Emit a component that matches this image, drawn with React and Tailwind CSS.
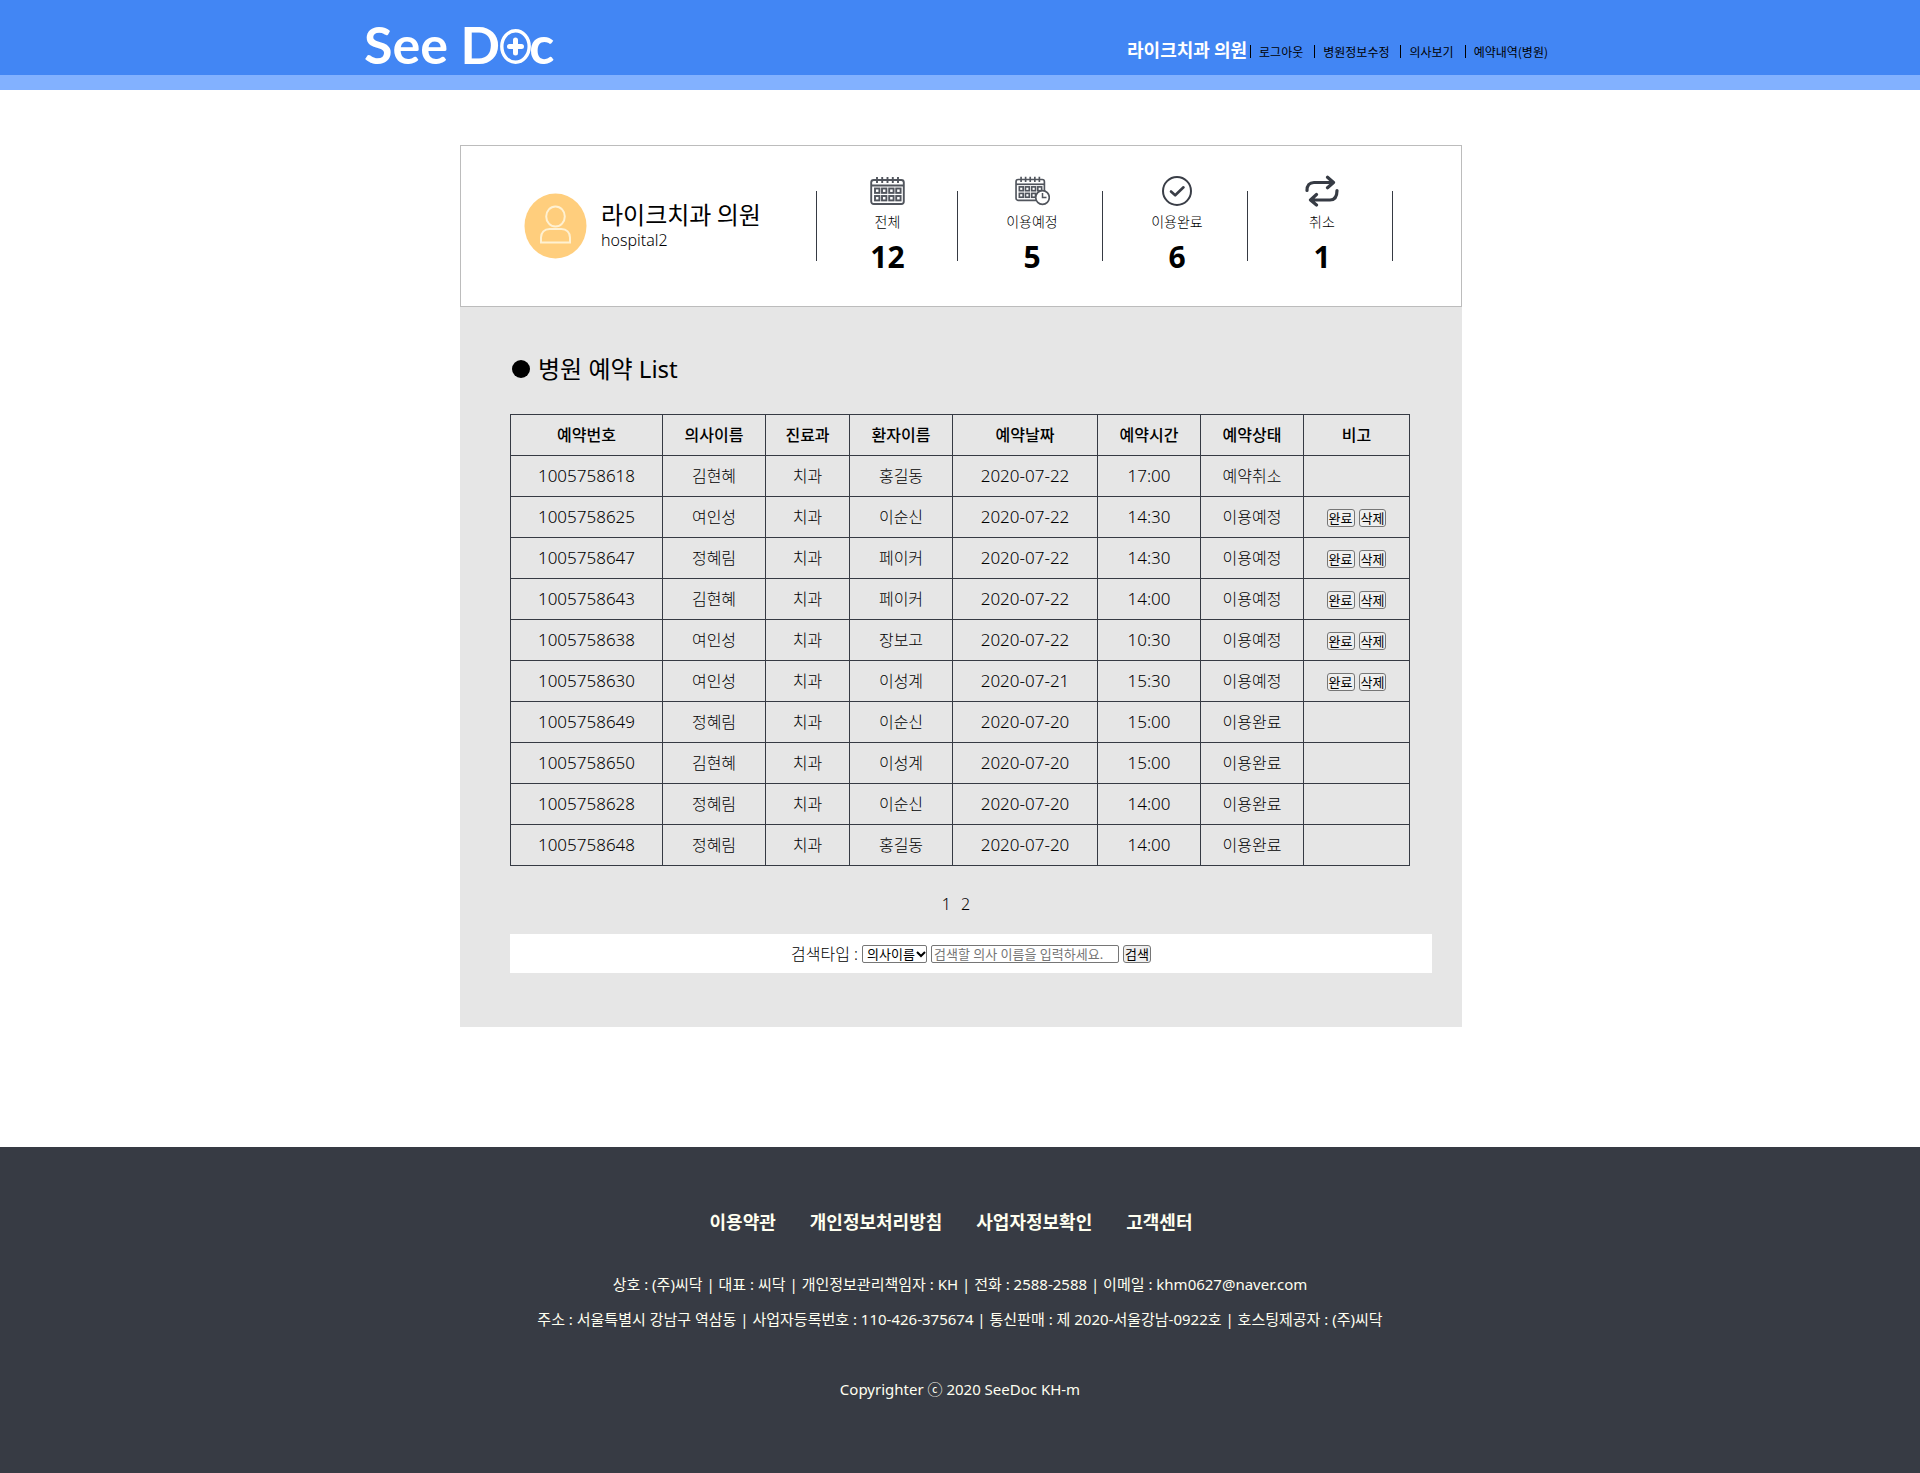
import React from "react";

const NAV = ["로그아웃", "병원정보수정", "의사보기", "예약내역(병원)"];

const COLUMNS = [
  ["예약번호", "w-[152px]"],
  ["의사이름", "w-[103px]"],
  ["진료과", "w-[84px]"],
  ["환자이름", "w-[103px]"],
  ["예약날짜", "w-[145px]"],
  ["예약시간", "w-[103px]"],
  ["예약상태", "w-[103px]"],
  ["비고", "w-[106px]"],
];

const ROWS = [
  ["1005758618", "김현혜", "치과", "홍길동", "2020-07-22", "17:00", "예약취소"],
  ["1005758625", "여인성", "치과", "이순신", "2020-07-22", "14:30", "이용예정"],
  ["1005758647", "정혜림", "치과", "페이커", "2020-07-22", "14:30", "이용예정"],
  ["1005758643", "김현혜", "치과", "페이커", "2020-07-22", "14:00", "이용예정"],
  ["1005758638", "여인성", "치과", "장보고", "2020-07-22", "10:30", "이용예정"],
  ["1005758630", "여인성", "치과", "이성계", "2020-07-21", "15:30", "이용예정"],
  ["1005758649", "정혜림", "치과", "이순신", "2020-07-20", "15:00", "이용완료"],
  ["1005758650", "김현혜", "치과", "이성계", "2020-07-20", "15:00", "이용완료"],
  ["1005758628", "정혜림", "치과", "이순신", "2020-07-20", "14:00", "이용완료"],
  ["1005758648", "정혜림", "치과", "홍길동", "2020-07-20", "14:00", "이용완료"],
];

const FOOTER_LINKS = ["이용약관", "개인정보처리방침", "사업자정보확인", "고객센터"];

function Logo() {
  return (
    <a href="#" aria-label="See Doc" className="flex items-baseline font-['Lato'] text-[52px] leading-[56px] font-bold text-white">
      <span>See D</span>
      <svg width="31" height="35" viewBox="0 0 31 35" fill="none" stroke="#fff" className="-mr-0.5 -mb-0.5">
        <ellipse cx="15.5" cy="17.5" rx="13.7" ry="15.700" strokeWidth="3.4" />
        <path d="M15.5 11v13M9.500 17.500h12" strokeWidth="5" strokeLinecap="round" />
      </svg>
      <span>c</span>
    </a>
  );
}

function CalendarBody({ cols }) {
  return (
    <>
      <rect x="1.2" y="4" width="32.6" height="24" rx="2.5" />
      <path d="M1.2 9.5h32.6" />
      <path d="M7 1v6M12.2 1v6M17.5 1v6M22.8 1v6M28 1v6" />
      {[12.5, 20].map((y) =>
        cols.map((x) => <rect key={`${x}-${y}`} x={x} y={y} width="4.4" height="4.4" />)
      )}
    </>
  );
}

function CalendarIcon() {
  return (
    <svg width="35" height="30" viewBox="0 0 35 30" fill="none" stroke="#51555d" strokeWidth="1.9">
      <CalendarBody cols={[5, 12, 19.2, 26.2]} />
    </svg>
  );
}

function CalendarClockIcon() {
  return (
    <svg width="35" height="30" viewBox="0 0 35 30" fill="none" stroke="#51555d" strokeWidth="1.9">
      <g transform="scale(0.87 0.87)">
        <CalendarBody cols={[5, 12, 19.2, 26.2]} />
      </g>
      <circle cx="27.5" cy="21.5" r="6.8" fill="#fff" strokeWidth="1.7" />
      <path d="M27.5 17v4.5h4" strokeWidth="1.5" />
    </svg>
  );
}

function CheckIcon() {
  return (
    <svg width="32" height="30" viewBox="0 0 32 30" fill="none" stroke="#3a3e47" strokeLinecap="round" strokeLinejoin="round">
      <circle cx="16" cy="15" r="14" strokeWidth="2" />
      <path d="M10 15.5l4.2 3.8 8.3-8" strokeWidth="2.6" />
    </svg>
  );
}

function RepeatIcon() {
  return (
    <svg width="36" height="32" viewBox="0 0 36 32" fill="none" stroke="#363b44" strokeWidth="3.2" strokeLinecap="round" strokeLinejoin="round">
      <path d="M3 15.500c0-5 2.500-8 7-8h19M23.500 2.200l6 5.300-6 5.300" />
      <path d="M33 15.500c0 6-2.500 9.500-7 9.500H7M12.500 19.500l-6 5.500 6 5" />
    </svg>
  );
}

const STATS = [
  ["전체", "12", CalendarIcon, "w-[141px] pl-0.5"],
  ["이용예정", "5", CalendarClockIcon, "w-[145px] pl-[5px]"],
  ["이용완료", "6", CheckIcon, "w-[145px] pl-[5px]"],
  ["취소", "1", RepeatIcon, "w-[145px] pl-[5px]"],
];

function SmallButton({ children, type = "button" }) {
  return (
    <button type={type} className="h-[18px] rounded-[3px] border border-[#767676] bg-[#efefef] px-px text-[13px] leading-4 font-normal text-black">
      {children}
    </button>
  );
}

export default function App() {
  return (
    <div className="min-h-screen bg-white font-['Noto_Sans','Noto_Sans_CJK_KR',sans-serif] font-light text-black">
      <header className="border-b-[15px] border-[#82b1ff] bg-[#4286f4]">
        <div className="mx-auto flex h-[75px] max-w-[1200px] justify-between pt-4 pr-3 pl-1">
          <Logo />
          <nav className="mt-[21px] flex h-6 items-center font-['Noto_Sans_CJK_KR',sans-serif]">
            <strong className="mr-[3px] text-lg leading-6 font-bold text-white">라이크치과 의원</strong>
            {NAV.map((t) => (
              <a key={t} href="#" className="mt-1 mr-[11px] border-l border-black pl-2 text-xs leading-[13px] font-normal last:mr-0">
                {t}
              </a>
            ))}
          </nav>
        </div>
      </header>

      <div className="pl-0.5">
        <main className="mx-auto mt-[55px] max-w-[1002px]">
          <section className="flex h-[162px] border border-[#bcbcbc]">
            <div className="flex w-[355px] items-center gap-[14px] pl-[63px]">
              <svg width="63" height="66" viewBox="0 0 63 66" fill="none" stroke="#fff1d2" strokeWidth="2">
                <ellipse cx="31.500" cy="33" rx="31" ry="32.500" fill="#ffce7d" stroke="none" />
                <ellipse cx="31.500" cy="23.500" rx="9.300" ry="10" />
                <path d="M17 49.500v-5c0-5 3.500-8.500 8.500-8.500h12c5 0 8.500 3.500 8.500 8.500v5z" />
              </svg>
              <div className="pb-1">
                <h1 className="font-['Noto_Sans_CJK_KR',sans-serif] text-2xl leading-8 font-normal">라이크치과 의원</h1>
                <p className="text-base leading-5">hospital2</p>
              </div>
            </div>
            {STATS.map(([label, value, Icon, width]) => (
              <div key={label} className={`relative flex flex-col items-center pt-[29px] before:absolute before:top-[45px] before:left-0 before:h-[70px] before:w-px before:bg-[#363a43] ${width}`}>
                <span className="flex h-8 items-center"><Icon /></span>
                <span className="mt-[3px] text-sm leading-6">{label}</span>
                <strong className="mt-[3px] text-[30px] leading-10 font-bold">{value}</strong>
              </div>
            ))}
            <div className="mt-[45px] h-[70px] w-px bg-[#363a43]" />
          </section>

          <section className="bg-[#e6e6e6] px-[50px] pt-11 pb-[54px]">
            <h2 className="flex items-center gap-2 pl-0.5 text-2xl leading-9 font-normal">
              <span className="size-[18px] rounded-full bg-black" />
              병원 예약 List
            </h2>
            <table className="mt-[27px] w-[900px] table-fixed border-collapse text-center text-base">
              <thead>
                <tr className="h-[41px]">
                  {COLUMNS.map(([name, width]) => (
                    <th key={name} scope="col" className={`border border-[#363a43] font-medium ${width}`}>{name}</th>
                  ))}
                </tr>
              </thead>
              <tbody>
                {ROWS.map((row) => (
                  <tr key={row[0]} className="h-[41px]">
                    {row.map((cell, i) => (
                      <td key={i} className={`border border-[#363a43] leading-6 ${/\d/.test(cell) ? "text-[17px]" : ""}`}>{cell}</td>
                    ))}
                    <td className="border border-[#363a43]">
                      {row[6] === "이용예정" && (
                        <div className="flex items-center justify-center gap-1 pt-0.5">
                          <SmallButton>완료</SmallButton>
                          <SmallButton>삭제</SmallButton>
                        </div>
                      )}
                    </td>
                  </tr>
                ))}
              </tbody>
            </table>
            <nav aria-label="페이지" className="mt-[26px] flex w-[892px] justify-center gap-2.5 leading-6">
              <a href="#">1</a>
              <a href="#">2</a>
            </nav>
            <form className="mt-[18px] -mr-5 flex h-[39px] items-center justify-center gap-1 bg-white text-[13px]" onSubmit={(e) => e.preventDefault()}>
              <label htmlFor="type" className="text-base leading-6">검색타입 :</label>
              <span className="relative flex">
                <select id="type" className="h-[18px] w-[65px] appearance-none rounded-[2px] border border-[#767676] bg-white pl-1 leading-4 font-normal">
                  <option>의사이름</option>
                </select>
                <svg className="pointer-events-none absolute top-1.5 right-px" width="10" height="7" viewBox="0 0 10 7" fill="none" stroke="#000" strokeWidth="2">
                  <path d="M1 1l4 4 4-4" />
                </svg>
              </span>
              <input aria-label="검색어" placeholder="검색할 의사 이름을 입력하세요." className="h-[18px] w-[188px] rounded-[2px] border border-[#767676] bg-white px-0.5 leading-4 font-normal placeholder:text-[#757575]" />
              <SmallButton type="submit">검색</SmallButton>
            </form>
          </section>
        </main>
      </div>

      <footer className="mt-[120px] flex h-[326px] flex-col items-center bg-[#373b44] pt-[60px] text-[15px] font-normal text-[#fffff0]">
        <nav className="mr-[18px] flex gap-[34px] font-['Noto_Sans_CJK_KR',sans-serif] text-lg leading-7 font-bold">
          {FOOTER_LINKS.map((t) => (
            <a key={t} href="#">{t}</a>
          ))}
        </nav>
        <p className="mt-8 leading-[35px]">상호 : (주)씨닥 | 대표 : 씨닥 | 개인정보관리책임자 : KH | 전화 : 2588-2588 | 이메일 : khm0627@naver.com</p>
        <p className="leading-[35px]">주소 : 서울특별시 강남구 역삼동 | 사업자등록번호 : 110-426-375674 | 통신판매 : 제 2020-서울강남-0922호 | 호스팅제공자 : (주)씨닥</p>
        <p className="mt-[35px] leading-[35px]">Copyrighter ⓒ 2020 SeeDoc KH-m</p>
      </footer>
    </div>
  );
}
